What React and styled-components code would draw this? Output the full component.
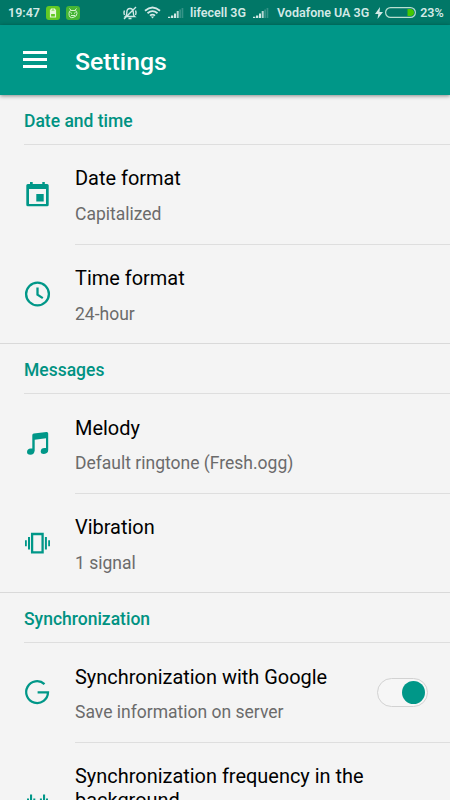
import React, { useState } from "react";
import styled, { createGlobalStyle } from "styled-components";

const GlobalStyle = createGlobalStyle`
  * {
    box-sizing: border-box;
  }

  body {
    margin: 0;
    background-color: #f4f4f4;
    font-family: Roboto, "Noto Sans", sans-serif;
    overflow: hidden;
  }
`;

const Screen = styled.div`
  width: 450px;
  height: 800px;
  overflow: hidden;
  background-color: #f4f4f4;
`;

const StatusBar = styled.div`
  height: 25px;
  padding: 0 8px;
  display: flex;
  align-items: center;
  background-color: #017767;
  color: #d3e9e6;
  font-size: 12.5px;
  font-weight: 600;
  line-height: 25px;
  white-space: nowrap;

  svg {
    display: block;
    flex: none;
  }
`;

const StatusText = styled.span`
  width: ${(props) => props.$width}px;
  margin-left: ${(props) => props.$gap || 0}px;
`;

const Notification = styled.div`
  width: 14px;
  height: 14px;
  margin-left: ${(props) => props.$gap}px;
  border-radius: 3px;
  background-color: ${(props) => props.$color};
`;

const StatusIcon = styled.svg`
  margin-left: ${(props) => props.$gap}px;
`;

const AppBar = styled.header`
  height: 70.2px;
  padding: 0 23px;
  display: flex;
  align-items: center;
  gap: 28px;
  background-color: #009788;
  box-shadow: 0 1px 4px rgba(0, 0, 0, 0.45);
  position: relative;
`;

const MenuButton = styled.button`
  width: 24px;
  height: 17px;
  margin-bottom: 1px;
  padding: 0;
  border: none;
  background: none;
  display: flex;
  flex-direction: column;
  justify-content: space-between;
  cursor: pointer;

  span {
    height: 3px;
    background-color: #fff;
  }
`;

const Title = styled.h1`
  margin: 3px 0 0;
  color: #fff;
  font-size: 24.8px;
  font-weight: 500;
  line-height: 30px;
`;

const SectionTitle = styled.h2`
  height: 49.8px;
  margin: 0 0 0 24px;
  padding-top: 15.5px;
  border-bottom: 1px solid #dedede;
  color: #009282;
  font-size: 17.5px;
  font-weight: 500;
  line-height: 21px;
`;

const SectionBox = styled.section`
  border-bottom: 1px solid #d9d9d9;
  height: 249.1px;
`;

const Row = styled.div`
  display: flex;
  min-height: 99.6px;
  padding-left: 24px;
`;

const RowIcon = styled.svg`
  flex: none;
  width: 26px;
  height: 26px;
  margin: ${(props) => props.$top || 36.2}px 25px 0 0;
  fill: #009788;
  overflow: visible;

  .line {
    fill: none;
    stroke: #009788;
    stroke-width: 2.3;
  }
`;

const RowBody = styled.div`
  flex: 1;
  display: flex;
  justify-content: space-between;
  border-bottom: ${(props) => (props.$last ? "none" : "1px solid #dedede")};
`;

const RowText = styled.div`
  padding-top: 21.5px;
`;

const RowTitle = styled.div`
  max-width: 320px;
  color: #000;
  font-size: 19.95px;
  line-height: 24px;
`;

const RowValue = styled.div`
  margin-top: 13.6px;
  color: #6b6b6b;
  font-size: 17.5px;
  line-height: 20px;
`;

const Toggle = styled.button`
  width: 51px;
  height: 29px;
  margin: 35.2px 22px 0 0;
  padding: 0 2px;
  display: flex;
  align-items: center;
  justify-content: ${(props) => (props.$on ? "flex-end" : "flex-start")};
  border: 1px solid #d2d2d2;
  border-radius: 15px;
  background-color: #f6f6f6;
  cursor: pointer;

  span {
    width: 23px;
    height: 23px;
    border-radius: 50%;
    background-color: ${(props) => (props.$on ? "#009788" : "#bdbdbd")};
  }
`;

function Signal({ gap }) {
  return (
    <StatusIcon $gap={gap} width="16" height="12" fill="#d3e9e6">
      <path d="M0 9.800h2.300V11H0zM3 8.500h2.300V11H3zM6 6.500h2V11H6z" />
      <path d="M8.700 4h2v7h-2z" opacity=".85" />
      <path d="M11.300 2.500h1.700V11h-1.700zM13.600 1h1.700v10h-1.700z" opacity=".25" />
    </StatusIcon>
  );
}

function CalendarIcon() {
  return (
    <RowIcon viewBox="0 0 26 26">
      <path fillRule="evenodd" d="M2.300 4.500Q2.300 3 3.800 3H6V1h2.700v2h9.600V1h2.500v2h2.400q1.500 0 1.500 1.500v19.300q0 1.500-1.500 1.500H3.800q-1.500 0-1.500-1.500zM5 8v15h17V8z" />
      <path d="M12.300 13h7.400v7.400h-7.400z" />
    </RowIcon>
  );
}

function ClockIcon() {
  return (
    <RowIcon viewBox="0 0 26 26">
      <circle className="line" cx="13.500" cy="13" r="11.400" />
      <path className="line" d="M13.500 6.500v7.200l5.300 3.400" />
    </RowIcon>
  );
}

function MelodyIcon() {
  return (
    <RowIcon viewBox="0 0 26 26">
      <path d="M8.300 5.200Q8.300 3.700 9.800 3.500L22.400 2Q24.200 1.800 24.200 3.500V20Q24.200 23.700 20 23.900Q16.800 24 16.700 21.400Q16.800 18 20.600 18H22V8.300L10.700 9.700V20.500Q10.300 24.700 6.300 24.700Q3 24.700 3 22Q3.200 18.700 6.700 18.600H8.300z" />
    </RowIcon>
  );
}

function VibrationIcon() {
  return (
    <RowIcon viewBox="0 0 26 26">
      <path className="line" d="M8.100 4h10.500v18.300H8.100z" />
      <path d="M4 6.900h2v12.600H4zM1 10.200h1.800v6H1zM20.900 6.900h2v12.600h-2zM24.200 10.200H26v6h-1.800z" />
    </RowIcon>
  );
}

function GoogleIcon() {
  return (
    <RowIcon viewBox="0 0 26 26">
      <path className="line" d="M20.500 5.100A10.900 10.900 0 1 0 24 13.300H13.600" />
    </RowIcon>
  );
}

function FrequencyIcon() {
  return (
    <RowIcon viewBox="0 0 26 26" $top={50}>
      <path d="M3 5.500h2v13H3zM6 1.500h2.100v22H6zM9.300 5.500h2v13h-2zM15.900 5.500h2v13h-2zM19 1.500h2.100v22H19zM22 5.500h2v13h-2z" />
    </RowIcon>
  );
}

function SettingsRow({ icon, title, value, last, children }) {
  return (
    <Row>
      {icon}
      <RowBody $last={last}>
        <RowText>
          <RowTitle>{title}</RowTitle>
          {value && <RowValue>{value}</RowValue>}
        </RowText>
        {children}
      </RowBody>
    </Row>
  );
}

export default function App() {
  const [sync, setSync] = useState(true);

  return (
    <>
      <GlobalStyle />
      <Screen>
        <StatusBar>
          <StatusText $width={31}>19:47</StatusText>
          <Notification $gap={7} $color="#62c924">
            <svg width="14" height="14">
              <path d="M4.500 4h1V3h3v1h1v7h-5z" fill="none" stroke="#e4f7d8" strokeWidth="1.200" />
              <path d="M5 4.500h4V8H5z" fill="#e4f7d8" />
            </svg>
          </Notification>
          <Notification $gap={6} $color="#45b535">
            <svg width="14" height="14" fill="none" stroke="#d4f2cc">
              <path d="M3.500 2.500l1.700 2h3.600l1.700-2M3 7.500Q3 4.500 5 4.500h4q2 0 2 3T7 11.500T3 7.500z" />
              <path d="M4.500 6.500l1.500 1M9.500 6.500L8 7.500M5 9.500h4" />
            </svg>
          </Notification>
          <StatusIcon $gap={43} width="14" height="14" fill="none" stroke="#d3e9e6" strokeWidth="1.400">
            <path d="M2.500 10.500q1.300-1 1.300-4Q3.800 2.500 7 2.500t3.300 4q0 3 1.300 4zM5.500 12.500h3M13 1L1 13M1.500 4.500Q.5 6.500 1.500 9M12.500 4.500q1 2 0 4.500" />
          </StatusIcon>
          <StatusIcon $gap={7} width="17" height="13" fill="none" stroke="#d3e9e6" strokeWidth="1.800">
            <path d="M1 4.800q7.500-6.500 15 0M3.500 7.300q5-4.300 10 0M6 9.600q2.500-2 5 0" />
            <path d="M6.800 10.500h3.400l-1.700 2z" fill="#d3e9e6" stroke="none" />
          </StatusIcon>
          <Signal gap={7} />
          <StatusText $width={57} $gap={6}>lifecell 3G</StatusText>
          <Signal gap={7} />
          <StatusText $width={93} $gap={8}>Vodafone UA 3G</StatusText>
          <StatusIcon $gap={6} width="8" height="12" fill="#d3e9e6">
            <path d="M5 0L0 7h3.300L2.500 12L8 5H4.500z" />
          </StatusIcon>
          <StatusIcon $gap={2} width="31" height="11">
            <rect x=".6" y=".6" width="29.800" height="9.800" rx="4.900" fill="none" stroke="#b9dfd0" strokeWidth="1.200" />
            <path d="M22.500 2H26q3 .5 3 3.500T26 9h-3.500z" fill="#45c800" />
          </StatusIcon>
          <StatusText $width={22} $gap={4}>23%</StatusText>
        </StatusBar>

        <AppBar>
          <MenuButton aria-label="Menu">
            <span />
            <span />
            <span />
          </MenuButton>
          <Title>Settings</Title>
        </AppBar>

        <SectionBox>
          <SectionTitle>Date and time</SectionTitle>
          <SettingsRow icon={<CalendarIcon />} title="Date format" value="Capitalized" />
          <SettingsRow icon={<ClockIcon />} title="Time format" value="24-hour" last />
        </SectionBox>

        <SectionBox>
          <SectionTitle>Messages</SectionTitle>
          <SettingsRow icon={<MelodyIcon />} title="Melody" value="Default ringtone (Fresh.ogg)" />
          <SettingsRow icon={<VibrationIcon />} title="Vibration" value="1 signal" last />
        </SectionBox>

        <SectionBox>
          <SectionTitle>Synchronization</SectionTitle>
          <SettingsRow icon={<GoogleIcon />} title="Synchronization with Google" value="Save information on server">
            <Toggle $on={sync} onClick={() => setSync(!sync)} aria-label="Synchronization with Google">
              <span />
            </Toggle>
          </SettingsRow>
          <SettingsRow icon={<FrequencyIcon />} title="Synchronization frequency in the background" last />
        </SectionBox>
      </Screen>
    </>
  );
}
